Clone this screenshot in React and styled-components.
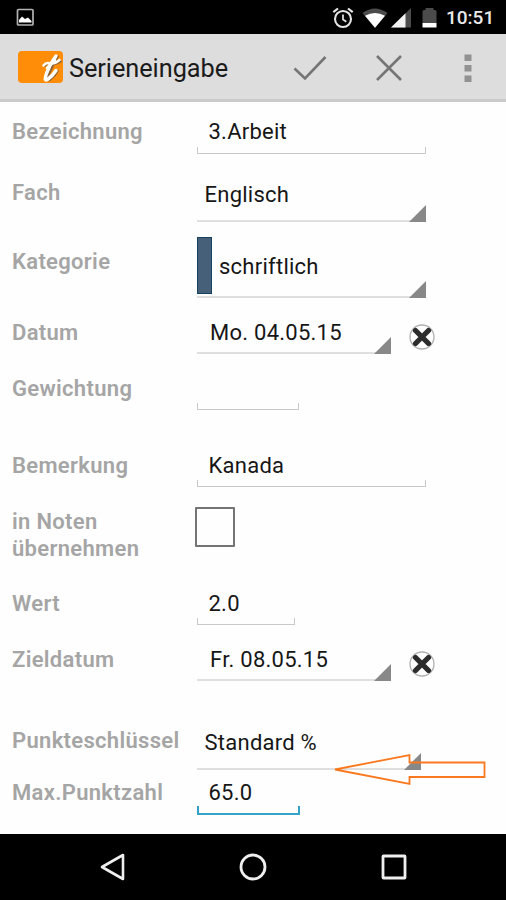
import React from 'react';
import styled, { createGlobalStyle, css } from 'styled-components';

const GlobalStyle = createGlobalStyle`
  * { box-sizing: border-box; }
  body { margin: 0; background: #fff; font-family: Roboto, "Noto Sans", sans-serif; }
  svg { display: block; flex: none; }
`;

const Screen = styled.div`
  width: 506px;
  height: 900px;
  display: flex;
  flex-direction: column;
  overflow: hidden;
  background: #fefefe;
`;

const StatusBar = styled.header`
  height: 34px;
  flex: none;
  display: flex;
  align-items: center;
  padding: 1px 11px 0 16px;
  background: #000;
`;

const StatusIcons = styled.div`
  margin-left: auto;
  display: flex;
  align-items: center;
`;

const StatusIcon = styled.span`
  margin-right: ${p => p.$gap}px;
`;

const Clock = styled.span`
  width: 49px;
  font-size: 19px;
  line-height: 24px;
  font-weight: 500;
  letter-spacing: 0;
  white-space: nowrap;
  color: #e9e9e9;
  padding-top: 1px;
`;

const ActionBar = styled.div`
  height: 68px;
  flex: none;
  display: flex;
  align-items: center;
  padding-left: 18px;
  background: #ddd;
  border-bottom: 3px solid #cacaca;
`;

const Title = styled.h1`
  width: 216px;
  margin: 5px 0 0 6px;
  font-size: 25.3px;
  line-height: 32px;
  font-weight: 400;
  letter-spacing: -0.05px;
  color: #1b1b1b;
`;

const Action = styled.button`
  width: ${p => p.$width}px;
  height: 65px;
  padding: 3px 0 0;
  border: 0;
  background: none;
  display: flex;
  align-items: center;
  justify-content: center;
`;

const Form = styled.main`
  position: relative;
  flex: 1;
  display: flex;
  flex-direction: column;
`;

const Row = styled.div`
  height: ${p => p.$height}px;
  flex: none;
  display: grid;
  grid-template-columns: 185px 1fr;
  padding-left: 12px;
`;

const Label = styled.div`
  padding-top: ${p => p.$top}px;
  font-size: 22px;
  line-height: 27px;
  font-weight: 600;
  letter-spacing: 0.32px;
  white-space: pre-line;
  color: #a5a5a5;
`;

const FieldLine = styled.div`
  display: flex;
  align-items: flex-end;
`;

const fieldText = css`
  position: relative;
  height: 100%;
  width: ${p => p.$width}px;
  padding: ${p => p.$top}px 0 0 ${p => p.$indent}px;
  font-size: 22px;
  line-height: 27px;
  letter-spacing: 0.25px;
  white-space: nowrap;
  color: #161616;
`;

const TextField = styled.div`
  ${fieldText}
  &::after {
    content: '';
    position: absolute;
    left: 0;
    right: 0;
    bottom: 0;
    height: ${p => (p.$active ? 7 : 6)}px;
    border: solid ${p => (p.$active ? '#35a2c9' : '#c9c9c9')};
    border-width: 0 ${p => (p.$active ? '2px 2px' : '1px 1.5px')};
  }
`;

const Spinner = styled.div`
  ${fieldText}
  border-bottom: 2px solid #dfdfdf;
  &::after {
    content: '';
    position: absolute;
    right: 0;
    bottom: -2px;
    width: 17px;
    height: 17px;
    background: #888;
    clip-path: polygon(100% 0, 100% 100%, 0 100%);
  }
`;

const CategorySpinner = styled(Spinner)`
  display: flex;
  padding: 0;
`;

const CategoryColor = styled.span`
  width: 15px;
  height: 57px;
  margin-top: 15px;
  background: #456078;
  border: 1px solid #16425f;
`;

const CategoryName = styled.span`
  padding: 31px 0 0 7px;
`;

const ClearButton = styled.button`
  margin: 0 0 4px 18px;
  padding: 0;
  border: 0;
  background: none;
`;

const CheckCell = styled.div`
  padding: 20px 0 0;
  margin-left: -2px;
`;

const Checkbox = styled.div`
  width: 40px;
  height: 40px;
  border: 2px solid #747474;
  border-radius: 1px;
`;

const ArrowOverlay = styled.svg`
  position: absolute;
  left: 330px;
  top: 648px;
`;

const NavBar = styled.nav`
  height: 66px;
  flex: none;
  display: grid;
  grid-template-columns: repeat(3, 140.5px);
  justify-content: center;
  align-items: center;
  justify-items: center;
  background: #000;
`;

const PictureIcon = () => (
  <svg width="19" height="19" viewBox="0 0 19 19">
    <rect x="1.5" y="1.5" width="15.5" height="15.5" rx="1" fill="none" stroke="#b2b2b2" strokeWidth="1.7" />
    <path d="M3 14.5V12L6 8.5L9 11L12 9.5L15.5 13V14.5Z" fill="#fff" />
  </svg>
);

const AlarmIcon = () => (
  <svg width="22" height="22" viewBox="0 0 22 22" fill="none" stroke="#e4e4e4">
    <circle cx="11" cy="12" r="8" strokeWidth="2.1" />
    <path d="M11 7.500V12.500L14.300 14.700" strokeWidth="1.700" />
    <path d="M1.300 5.200L6 1.500M16 1.500L20.700 5.200" strokeWidth="2.200" />
  </svg>
);

const WifiIcon = () => (
  <svg width="26" height="20" viewBox="0 0 26 20">
    <path d="M0.500 5Q13-4 25.500 5L13 20Z" fill="#4b4b4b" />
    <path d="M3 7.800Q13 2.300 23 7.800L13 19.700Z" fill="#fff" />
  </svg>
);

const SignalIcon = () => (
  <svg width="20" height="20" viewBox="0 0 20 20">
    <path d="M0 19.500L20 0V19.500Z" fill="#4b4b4b" />
    <path d="M0 19.500L14.500 5.300V19.500Z" fill="#f2f2f2" />
  </svg>
);

const BatteryIcon = () => (
  <svg width="15" height="22" viewBox="0 0 15 22">
    <path d="M0.500 16V4.500Q0.500 3 2 3H3.500V1H11.500V3H13Q14.500 3 14.500 4.500V16Z" fill="#4b4b4b" />
    <path d="M0.500 16H14.500V20.500H0.500Z" fill="#fff" />
  </svg>
);

const AppLogo = () => (
  <svg width="45" height="32" viewBox="0 0 45 32">
    <rect width="45" height="32" rx="4" fill="#ff8d08" />
    <g fill="none" strokeLinecap="round" strokeLinejoin="round">
      <path d="M39.500 5.500Q34 15 30.500 23.500Q27.500 31 32 28.500Q37 25 39.500 20M27 14.500Q30 11 33 12.500Q37 14 42.500 10.500" stroke="#8c6230" strokeWidth="2.600" />
      <path d="M38 5Q31.500 14 28.500 22.500Q25.500 31 29.500 28.500Q34.500 25 38 19.500" stroke="#fff" strokeWidth="3.400" />
      <path d="M25.500 14.500Q28 11 32 12.300Q36 13.500 41.500 9M29 17L37 9" stroke="#fff" strokeWidth="2.600" />
    </g>
  </svg>
);

const CheckIcon = () => (
  <svg width="34" height="26" viewBox="0 0 34 26">
    <path d="M1.500 13.500L12 23.500L32.500 2" fill="none" stroke="#757575" strokeWidth="2.600" />
  </svg>
);

const CloseIcon = () => (
  <svg width="26" height="26" viewBox="0 0 26 26">
    <path d="M1 1L25 25M25 1L1 25" fill="none" stroke="#757575" strokeWidth="2.600" />
  </svg>
);

const OverflowIcon = () => (
  <svg width="8" height="29" viewBox="0 0 8 29" fill="#929292">
    <path d="M0.500 0.500H7.500V7H0.500ZM0.500 11H7.500V17.500H0.500ZM0.500 21.500H7.500V28H0.500Z" />
  </svg>
);

const ClearIcon = () => (
  <svg width="26" height="26" viewBox="0 0 26 26">
    <circle cx="13" cy="13" r="12" fill="#fff" stroke="#b0b0b0" strokeWidth="1.300" />
    <path d="M6.500 6.500L19.500 19.500M19.500 6.500L6.500 19.500" stroke="#2c2c2c" strokeWidth="5.300" strokeLinecap="round" />
  </svg>
);

export default function App() {
  return (
    <>
      <GlobalStyle />
      <Screen>
        <StatusBar>
          <PictureIcon />
          <StatusIcons>
            <StatusIcon $gap={8}><AlarmIcon /></StatusIcon>
            <StatusIcon $gap={3}><WifiIcon /></StatusIcon>
            <StatusIcon $gap={11}><SignalIcon /></StatusIcon>
            <StatusIcon $gap={9}><BatteryIcon /></StatusIcon>
            <Clock>10:51</Clock>
          </StatusIcons>
        </StatusBar>
        <ActionBar>
          <AppLogo />
          <Title>Serieneingabe</Title>
          <Action $width={50}><CheckIcon /></Action>
          <Action $width={108}><CloseIcon /></Action>
          <Action $width={50}><OverflowIcon /></Action>
        </ActionBar>
        <Form>
          <Row $height={52}>
            <Label $top={16}>Bezeichnung</Label>
            <TextField $width={229} $top={16} $indent={11.5}>3.Arbeit</TextField>
          </Row>
          <Row $height={68}>
            <Label $top={25}>Fach</Label>
            <Spinner $width={229} $top={27} $indent={7.5}>Englisch</Spinner>
          </Row>
          <Row $height={76}>
            <Label $top={26}>Kategorie</Label>
            <CategorySpinner $width={229}>
              <CategoryColor />
              <CategoryName>schriftlich</CategoryName>
            </CategorySpinner>
          </Row>
          <Row $height={56}>
            <Label $top={21}>Datum</Label>
            <FieldLine>
              <Spinner $width={194} $top={21} $indent={13}>Mo. 04.05.15</Spinner>
              <ClearButton aria-label="Datum löschen"><ClearIcon /></ClearButton>
            </FieldLine>
          </Row>
          <Row $height={56}>
            <Label $top={21}>Gewichtung</Label>
            <TextField $width={102} $top={0} $indent={11} />
          </Row>
          <Row $height={77}>
            <Label $top={42}>Bemerkung</Label>
            <TextField $width={229} $top={42} $indent={11.5}>Kanada</TextField>
          </Row>
          <Row $height={78}>
            <Label $top={21}>{'in Noten\nübernehmen'}</Label>
            <CheckCell><Checkbox /></CheckCell>
          </Row>
          <Row $height={60}>
            <Label $top={25}>Wert</Label>
            <TextField $width={98} $top={25} $indent={11.5}>2.0</TextField>
          </Row>
          <Row $height={56}>
            <Label $top={21}>Zieldatum</Label>
            <FieldLine>
              <Spinner $width={194} $top={21} $indent={13}>Fr. 08.05.15</Spinner>
              <ClearButton aria-label="Zieldatum löschen"><ClearIcon /></ClearButton>
            </FieldLine>
          </Row>
          <Row $height={89}>
            <Label $top={46}>Punkteschlüssel</Label>
            <Spinner $width={224} $top={48} $indent={7.5}>Standard %</Spinner>
          </Row>
          <Row $height={45}>
            <Label $top={9}>Max.Punktzahl</Label>
            <TextField $active $width={103} $top={9} $indent={11.5}>65.0</TextField>
          </Row>
          <ArrowOverlay width="160" height="40" viewBox="0 0 160 40">
            <path d="M5 19.500L79.500 5V12.500H154.500V27H79.500V34Z" fill="none" stroke="#fa791f" strokeWidth="1.800" />
          </ArrowOverlay>
        </Form>
        <NavBar>
          <svg width="26" height="28" viewBox="0 0 26 28">
            <path d="M2 14L23 2V26Z" fill="none" stroke="#efefef" strokeWidth="2.600" strokeLinejoin="round" />
          </svg>
          <svg width="28" height="28" viewBox="0 0 28 28">
            <circle cx="14" cy="14" r="12" fill="none" stroke="#efefef" strokeWidth="2.800" />
          </svg>
          <svg width="26" height="26" viewBox="0 0 26 26">
            <rect x="2" y="2" width="22" height="22" rx="0.500" fill="none" stroke="#efefef" strokeWidth="2.800" />
          </svg>
        </NavBar>
      </Screen>
    </>
  );
}
